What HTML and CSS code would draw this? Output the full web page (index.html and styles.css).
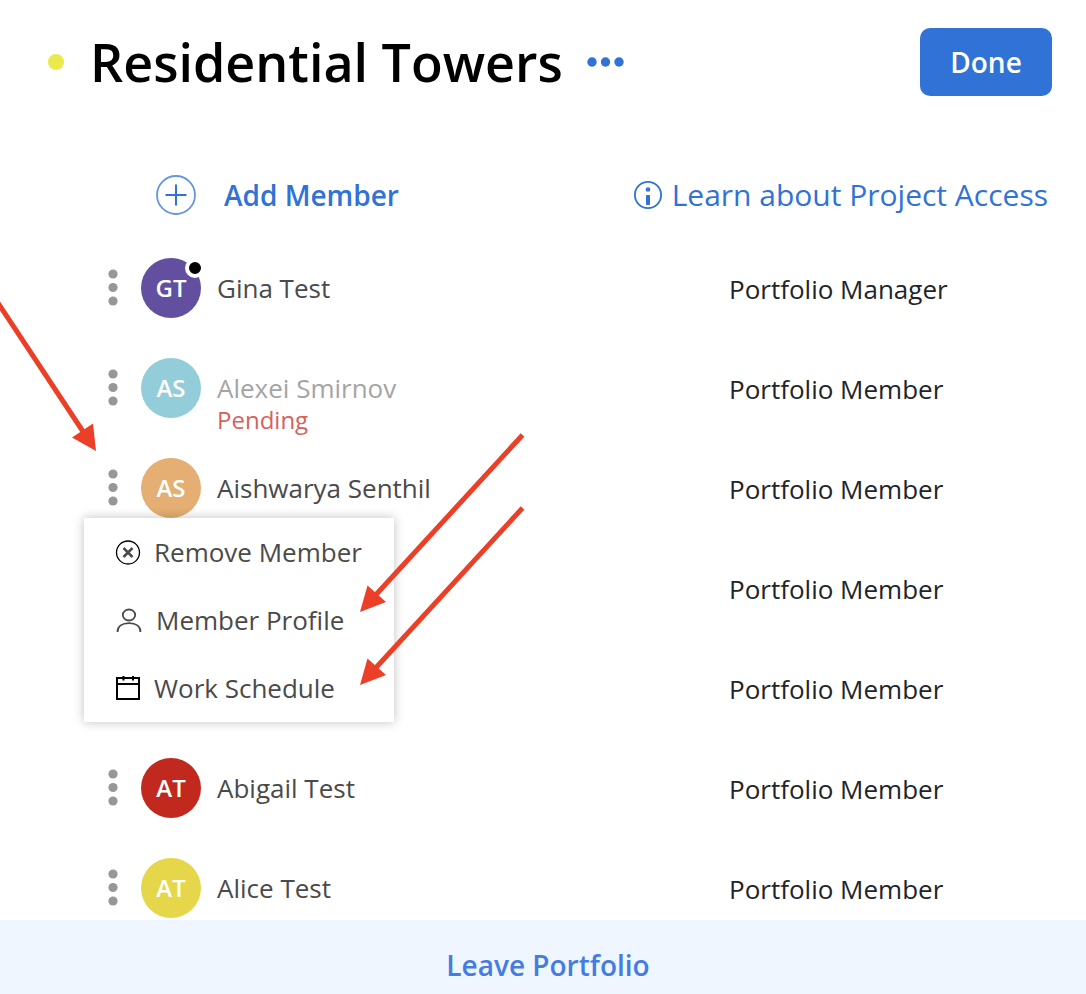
FILE: index.html
```html
<!DOCTYPE html>
<html lang="en">
<head>
    <meta charset="UTF-8">
    <meta name="viewport" content="width=device-width, initial-scale=1.0">
    <title>Residential Towers</title>
    <link rel="stylesheet" href="styles.css">
</head>

<body>
    <header class="header">
        <span class="status"></span>
        <h1 class="title">Residential Towers</h1>
        <button class="icon-btn more" type="button" aria-label="More">
            <svg width="38" height="10" viewBox="0 0 38 10" fill="currentColor">
                <circle cx="5" cy="5" r="4.7"/>
                <circle cx="18.5" cy="5" r="4.7"/>
                <circle cx="32" cy="5" r="4.7"/>
            </svg>
        </button>
        <button class="done" type="button">Done</button>
    </header>

    <div class="toolbar">
        <button class="add" type="button">
            <svg width="40" height="40" viewBox="0 0 40 40" fill="none" stroke="currentColor" stroke-width="2">
                <circle cx="20" cy="20" r="19" stroke-width="1.8" opacity=".75"/>
                <path d="M9.500 20h21M20 9.500v21"/>
            </svg>
            Add Member
        </button>
        <a class="learn" href="#">
            <svg width="28" height="28" viewBox="0 0 28 28" fill="none" stroke="currentColor" stroke-width="1.8">
                <circle cx="14" cy="14" r="13.1"/>
                <circle cx="14" cy="8.5" r="2.3" fill="currentColor" stroke="none"/>
                <rect x="12" y="14" width="4" height="10" rx=".8" fill="currentColor" stroke="none"/>
            </svg>
            Learn about Project Access
        </a>
    </div>

    <ul class="members">
        <li class="member">
            <button class="icon-btn" type="button" aria-label="Options"><svg class="dots" viewBox="0 0 10 38"><circle cx="5" cy="5" r="4.6"/><circle cx="5" cy="18.5" r="4.6"/><circle cx="5" cy="32" r="4.6"/></svg></button>
            <div class="avatar purple">GT<span class="badge"></span></div>
            <div class="name">Gina Test</div>
            <div class="role">Portfolio Manager</div>
        </li>
        <li class="member">
            <button class="icon-btn" type="button" aria-label="Options"><svg class="dots" viewBox="0 0 10 38"><circle cx="5" cy="5" r="4.6"/><circle cx="5" cy="18.5" r="4.6"/><circle cx="5" cy="32" r="4.6"/></svg></button>
            <div class="avatar teal">AS</div>
            <div class="name inactive">Alexei Smirnov<span class="pending">Pending</span></div>
            <div class="role">Portfolio Member</div>
        </li>
        <li class="member">
            <button class="icon-btn" type="button" aria-label="Options" aria-expanded="true"><svg class="dots" viewBox="0 0 10 38"><circle cx="5" cy="5" r="4.6"/><circle cx="5" cy="18.5" r="4.6"/><circle cx="5" cy="32" r="4.6"/></svg></button>
            <div class="avatar orange">AS</div>
            <div class="name">Aishwarya Senthil</div>
            <div class="role">Portfolio Member</div>

            <div class="menu">
                <button class="menu-item" type="button">
                    <svg width="26" height="26" viewBox="0 0 26 26" fill="none">
                        <circle cx="13" cy="13.5" r="11.5" stroke="#000" stroke-width="1.3"/>
                        <path d="M8.500 9l9 9M17.500 9l-9 9" stroke="#4a4a4a" stroke-width="2.5"/>
                    </svg>
                    Remove Member
                </button>
                <button class="menu-item" type="button">
                    <svg width="28" height="26" viewBox="0 0 28 26" fill="none" stroke="#4a4a4a" stroke-width="1.8">
                        <ellipse cx="14" cy="8" rx="6.2" ry="5.500"/>
                        <path d="M2.500 25c0-5.500 4.500-8.800 11.500-8.800s11.500 3.300 11.500 8.800"/>
                    </svg>
                    Member Profile
                </button>
                <button class="menu-item" type="button">
                    <svg width="26" height="26" viewBox="0 0 26 26" fill="none" stroke="#000" stroke-width="2">
                        <rect x="2" y="3" width="22" height="21"/>
                        <path d="M2 9h22M8.500 1v4.500M18 1v4.500"/>
                    </svg>
                    Work Schedule
                </button>
            </div>
        </li>
        <li class="member">
            <div class="role">Portfolio Member</div>
        </li>
        <li class="member">
            <div class="role">Portfolio Member</div>
        </li>
        <li class="member">
            <button class="icon-btn" type="button" aria-label="Options"><svg class="dots" viewBox="0 0 10 38"><circle cx="5" cy="5" r="4.6"/><circle cx="5" cy="18.5" r="4.6"/><circle cx="5" cy="32" r="4.6"/></svg></button>
            <div class="avatar red">AT</div>
            <div class="name">Abigail Test</div>
            <div class="role">Portfolio Member</div>
        </li>
        <li class="member">
            <button class="icon-btn" type="button" aria-label="Options"><svg class="dots" viewBox="0 0 10 38"><circle cx="5" cy="5" r="4.6"/><circle cx="5" cy="18.5" r="4.6"/><circle cx="5" cy="32" r="4.6"/></svg></button>
            <div class="avatar yellow">AT</div>
            <div class="name">Alice Test</div>
            <div class="role">Portfolio Member</div>
        </li>
    </ul>

    <footer class="footer">
        <button class="leave" type="button">Leave Portfolio</button>
    </footer>

    <!-- arrows pointing at the options button and the menu items -->
    <svg class="arrows" width="540" height="700" viewBox="0 0 540 700" stroke="#eb4027" fill="#eb4027">
        <path d="M-4 300L84 433M522.500 435L372 599M522.500 508L372 672" stroke-width="5"/>
        <path d="M96 451L72 437.500L93 423.500zM360 612L367.500 585.500L386 602zM360 685L367.500 658.500L386 675z" stroke="none"/>
    </svg>
</body>
</html>
```

FILE: styles.css
```css
body, ul, h1 {
    margin: 0;
    padding: 0;
    list-style: none;
}
body {
    position: relative;
    display: flex;
    flex-direction: column;
    height: 100vh;
    overflow: hidden;
    font-family: "Open Sans", "Noto Sans", sans-serif;
    font-size: 26px;
    background: #fff;
}
button {
    padding: 0;
    border: 0;
    background: none;
    font: inherit;
    color: inherit;
    cursor: pointer;
}
svg {
    flex: none;
}

/* header */
.header {
    display: flex;
    align-items: center;
    padding: 28px 34px 28px 48px;
}
.status {
    width: 16px;
    height: 16px;
    border-radius: 50%;
    background: #ebea4c;
}
.title {
    margin: 0 24px 0 26px;
    font-size: 52px;
    line-height: 68px;
    font-weight: 600;
    color: #000;
}
.icon-btn {
    display: flex;
}
.more {
    color: #3072d6;
}
.done {
    width: 132px;
    height: 68px;
    margin-left: auto;
    border-radius: 10px;
    background: #3072d6;
    font-size: 28px;
    font-weight: 600;
    color: #fff;
}

/* add member / help link */
.toolbar {
    display: flex;
    align-items: center;
    justify-content: space-between;
    padding: 50px 38px 22px 156px;
    color: #3072d6;
}
.add {
    display: flex;
    align-items: center;
    gap: 28px;
    font-size: 28px;
    line-height: 42px;
    font-weight: 600;
}
.learn {
    display: flex;
    align-items: center;
    gap: 10px;
    font-size: 30px;
    line-height: 42px;
    color: inherit;
    text-decoration: none;
}

/* member list */
.members {
    flex: 1;
    min-height: 0;
}
.member {
    position: relative;
    display: flex;
    align-items: center;
    height: 100px;
    padding-left: 108px;
}
.dots {
    width: 10px;
    height: 38px;
    fill: #979797;
}
.avatar {
    position: relative;
    width: 60px;
    height: 60px;
    margin: 0 16px 0 23px;
    border-radius: 50%;
    font-size: 24px;
    line-height: 60px;
    font-weight: 600;
    text-align: center;
    color: #fff;
}
.purple { background: #624fa0; }
.teal { background: #93cdd9; }
.orange { background: #e5ae72; }
.red { background: #c1291e; }
.yellow { background: #e6d64a; }
.badge {
    position: absolute;
    top: 0;
    right: -4px;
    width: 12px;
    height: 12px;
    border: 4px solid #fff;
    border-radius: 50%;
    background: #000;
}
.name {
    position: relative;
    line-height: 36px;
    color: #4a4a4a;
}
.inactive {
    color: #a4a4a4;
}
.pending {
    position: absolute;
    top: 32px;
    left: 0;
    font-size: 24px;
    color: #d9605c;
}
.role {
    width: 357px;
    margin-left: auto;
    padding-top: 2px;
    line-height: 36px;
    color: #212529;
}

/* options menu */
.menu {
    position: absolute;
    top: 80px;
    left: 84px;
    z-index: 1;
    width: 310px;
    background: #fff;
    box-shadow: 0 0 10px rgba(0, 0, 0, .25);
}
.menu-item {
    display: flex;
    align-items: center;
    gap: 13px;
    width: 100%;
    height: 68px;
    padding-left: 31px;
    color: #4a4a4a;
}

/* footer */
.footer {
    z-index: 2;
    padding: 24px 0 8px 10px;
    background: #eff6ff;
    text-align: center;
}
.leave {
    display: block;
    margin: 0 auto;
    font-size: 28px;
    line-height: 42px;
    font-weight: 600;
    color: #437ce2;
}

.arrows {
    position: absolute;
    top: 0;
    left: 0;
    z-index: 3;
    pointer-events: none;
}
```
